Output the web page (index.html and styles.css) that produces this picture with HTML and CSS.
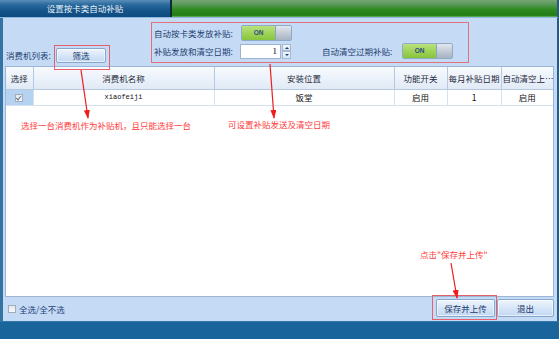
FILE: index.html
```html
<!DOCTYPE html>
<html>
<head>
<meta charset="utf-8">
<link rel="stylesheet" href="styles.css">
</head>
<body>
<div class="window">
  <div class="titlebar">
    <div class="title-left">设置按卡类自动补贴</div>
    <div class="title-sep"></div>
    <div class="title-right"></div>
  </div>
  <div class="main">
    <div class="toolbar">
      <div class="list-group">
        <span class="list-label">消费机列表:</span>
        <button class="btn btn-filter">筛选</button>
      </div>
      <div class="settings">
        <span class="lbl">自动按卡类发放补贴:</span>
        <div class="toggle"><span class="on">ON</span><span class="knob"></span></div>
        <span class="lbl row2">补贴发放和清空日期:</span>
        <div class="spin row2"><span class="spin-input">1</span><span class="spin-btns"><span class="sb up"></span><span class="sb down"></span></span></div>
        <span class="lbl row2 lbl2">自动清空过期补贴:</span>
        <div class="toggle row2"><span class="on">ON</span><span class="knob"></span></div>
      </div>
    </div>
    <div class="grid-wrap">
      <table class="grid">
        <colgroup>
          <col class="c1"><col class="c2"><col class="c3"><col class="c4"><col class="c5"><col class="c6">
        </colgroup>
        <thead>
          <tr><th>选择</th><th>消费机名称</th><th>安装位置</th><th>功能开关</th><th>每月补贴日期</th><th>自动清空上…</th></tr>
        </thead>
        <tbody>
          <tr>
            <td class="sel"><span class="chk checked"></span></td>
            <td class="mono">xiaofeiji</td>
            <td>饭堂</td>
            <td>启用</td>
            <td>1</td>
            <td>启用</td>
          </tr>
        </tbody>
      </table>
    </div>
    <div class="footer">
      <label class="all"><span class="chk"></span><span>全选/全不选</span></label>
      <div class="actions">
        <button class="btn btn-save">保存并上传</button>
        <button class="btn btn-exit">退出</button>
      </div>
    </div>
  </div>
  <div class="bottombar"></div>

  <div class="annot">
    <svg class="annot-svg" width="559" height="339" viewBox="0 0 559 339">
      <defs>
        <marker id="ah" markerWidth="9" markerHeight="6" refX="8" refY="3" orient="auto" markerUnits="userSpaceOnUse">
          <path d="M0,0 L9,3 L0,6 z" fill="#f01c1c"/>
        </marker>
      </defs>
      <rect x="54.5" y="45.5" width="55" height="24" fill="none" stroke="#e8606c" stroke-width="1"/>
      <rect x="432.5" y="295.5" width="64" height="24" fill="none" stroke="#e8606c" stroke-width="1"/>
      <line x1="81" y1="70" x2="88" y2="118" stroke="#f01c1c" stroke-width="1.2" marker-end="url(#ah)"/>
      <line x1="270" y1="64" x2="274" y2="118" stroke="#f01c1c" stroke-width="1.2" marker-end="url(#ah)"/>
      <line x1="451" y1="263" x2="457" y2="298" stroke="#f01c1c" stroke-width="1.2" marker-end="url(#ah)"/>
    </svg>
    <div class="note note1">选择一台消费机作为补贴机，且只能选择一台</div>
    <div class="note note2">可设置补贴发送及清空日期</div>
    <div class="note note3">点击"保存并上传"</div>
  </div>
</div>
</body>
</html>
```

FILE: styles.css
```css
html, body {
  margin: 0;
  padding: 0;
}
body {
  width: 559px;
  height: 339px;
  overflow: hidden;
  font-family: "Noto Sans CJK SC", "Noto Sans", sans-serif;
  font-size: 8.5px;
  line-height: 1;
  color: #1f3d6e;
}
.window {
  position: relative;
  width: 559px;
  height: 339px;
  display: flex;
  flex-direction: column;
  background: #c5dbf5;
}

/* title bar */
.titlebar {
  height: 18px;
  display: flex;
  border-right: 2px solid #1d5e90;
  border-bottom: 1px solid #8fb8de;
  box-sizing: border-box;
}
.title-left {
  width: 170px;
  display: flex;
  align-items: center;
  justify-content: center;
  color: #e8f0f8;
  font-size: 8.5px;
  background: linear-gradient(#5a8fba 0%, #2d6c9f 25%, #15558a 60%, #0d4a80 100%);
}
.title-sep {
  width: 2px;
  background: #0e2a35;
}
.title-right {
  flex: 1;
  background: linear-gradient(#76a676 0%, #5b985a 25%, #2f8a22 55%, #1f7c12 90%, #6fb866 100%);
}

/* main */
.main {
  flex: 1;
  display: flex;
  flex-direction: column;
  border-left: 3px solid #3573a5;
  border-right: 2px solid #1d5e90;
  padding: 0 3px 0 2px;
  min-height: 0;
}

.toolbar {
  height: 48px;
  display: flex;
  align-items: flex-start;
  padding-top: 4px;
  box-sizing: border-box;
}
.list-group {
  display: flex;
  align-items: center;
  margin-top: 26px;
}
.list-label {
  width: 51px;
  padding-left: 1px;
  box-sizing: border-box;
}
.btn {
  font-family: "Noto Sans CJK SC", "Noto Sans", sans-serif;
  font-size: 8.5px;
  line-height: 1;
  color: #1c3a6a;
  padding: 0;
  margin: 0;
  border: 1px solid #86a6cc;
  border-radius: 2px;
  background: linear-gradient(#eef5fd 0%, #d7e6f8 50%, #c2d8f2 100%);
  box-shadow: inset 0 0 0 1px rgba(255,255,255,0.6);
}
.btn-filter {
  width: 50px;
  height: 15px;
}

.settings {
  margin-left: 45px;
  width: 318px;
  height: 41px;
  box-sizing: border-box;
  border: 1px solid #e2717c;
  padding: 2px 15px 3px 2px;
  display: grid;
  grid-template-columns: 86px 52px 30px 80px 50px;
  grid-template-rows: 16px 16px;
  row-gap: 2px;
  align-items: center;
}
.settings .lbl {
  grid-column: 1;
}
.settings .lbl.lbl2 {
  grid-column: 4;
}
.settings .row2 {
  grid-row: 2;
}
.settings .toggle {
  grid-column: 2;
  margin-left: 1px;
}
.settings .toggle.row2 {
  grid-column: 5;
  margin-left: 0;
}
.settings .spin {
  grid-column: 2;
}

.toggle {
  display: flex;
  width: 51px;
  height: 16px;
  box-sizing: border-box;
  border: 1px solid #90a9c6;
  border-radius: 2px;
  overflow: hidden;
}
.toggle .on {
  width: 33px;
  display: flex;
  align-items: center;
  justify-content: center;
  background: linear-gradient(#b9e27e 0%, #9fd35a 50%, #88c43c 100%);
  font-family: "Liberation Sans", sans-serif;
  font-weight: bold;
  font-size: 6.5px;
  color: #2d4b7c;
}
.toggle .knob {
  flex: 1;
  border-left: 1px solid #8ca3bf;
  background: linear-gradient(#e2e7ee 0%, #c3ccd7 50%, #a7b3c2 100%);
}

.spin {
  display: flex;
  height: 15px;
  align-items: stretch;
}
.spin-input {
  width: 41px;
  box-sizing: border-box;
  border: 1px solid #9bb4cf;
  background: #fff;
  color: #000;
  display: flex;
  align-items: center;
  justify-content: flex-end;
  padding-right: 3px;
  font-family: "Liberation Serif", serif;
  font-size: 9px;
}
.spin-btns {
  width: 9px;
  margin-left: 1px;
  display: flex;
  flex-direction: column;
}
.sb {
  flex: 1;
  box-sizing: border-box;
  border: 1px solid #a6bbd3;
  background: linear-gradient(#f4f8fc, #d8e4f2);
  position: relative;
}
.sb::after {
  content: "";
  position: absolute;
  left: 2px;
  top: 2px;
  border-left: 2px solid transparent;
  border-right: 2px solid transparent;
}
.sb.up::after {
  border-bottom: 2px solid #24426e;
}
.sb.down::after {
  border-top: 2px solid #24426e;
}

/* grid */
.grid-wrap {
  flex: 1;
  background: #fff;
  border: 1px solid #9cb7d6;
  min-height: 0;
}
.grid {
  width: 100%;
  table-layout: fixed;
  border-collapse: collapse;
}
.c1 { width: 27px; }
.c2 { width: 181px; }
.c3 { width: 180px; }
.c4 { width: 53px; }
.c5 { width: 54px; }
.grid th {
  height: 22px;
  font-weight: normal;
  color: #1e2a3a;
  background: linear-gradient(#f7fafe 0%, #ecf2fa 50%, #e0e9f5 100%);
  border-right: 1px solid #b4c9e2;
  border-bottom: 1px solid #b4c9e2;
  white-space: nowrap;
  overflow: hidden;
  padding: 0 1px;
}
.grid th:last-child {
  border-right: none;
}
.grid td {
  height: 15px;
  text-align: center;
  color: #111;
  border-right: 1px solid #d4e1ef;
  border-bottom: 1px solid #d4e1ef;
  padding: 0;
}
.grid td:last-child {
  border-right: none;
}
.grid td.sel {
  background: #b6d2f1;
}
.grid td.mono {
  font-family: "Liberation Mono", monospace;
  font-size: 7px;
}

.chk {
  display: inline-block;
  width: 8px;
  height: 8px;
  box-sizing: border-box;
  border: 1px solid #a2abb6;
  background: linear-gradient(#e4e8ee, #f6f8fa);
  vertical-align: middle;
  position: relative;
}
.chk.checked::after {
  content: "";
  position: absolute;
  left: 1px;
  top: 0px;
  width: 2px;
  height: 4px;
  border-right: 1px solid #5c6f8a;
  border-bottom: 1px solid #5c6f8a;
  transform: rotate(40deg);
}

/* footer */
.footer {
  height: 24px;
  display: flex;
  align-items: flex-start;
  justify-content: space-between;
}
.all {
  display: flex;
  align-items: center;
  margin-top: 8px;
  margin-left: 3px;
  gap: 3px;
  color: #24427a;
}
.actions {
  display: flex;
  gap: 2px;
  margin-top: 2px;
}
.btn-save {
  width: 59px;
  height: 18px;
}
.btn-exit {
  width: 57px;
  height: 18px;
}

.bottombar {
  height: 18px;
  background: #19649a;
  border-top: 1px solid #2f78ad;
  box-sizing: border-box;
}

/* annotations */
.annot {
  position: absolute;
  left: 0;
  top: 0;
  width: 559px;
  height: 339px;
  pointer-events: none;
}
.annot-svg {
  position: absolute;
  left: 0;
  top: 0;
}
.note {
  position: absolute;
  color: #ff3b3b;
  font-size: 8.5px;
  white-space: nowrap;
}
.note1 { left: 21px; top: 121px; }
.note2 { left: 228px; top: 120px; }
.note3 { left: 420px; top: 250px; }
```
